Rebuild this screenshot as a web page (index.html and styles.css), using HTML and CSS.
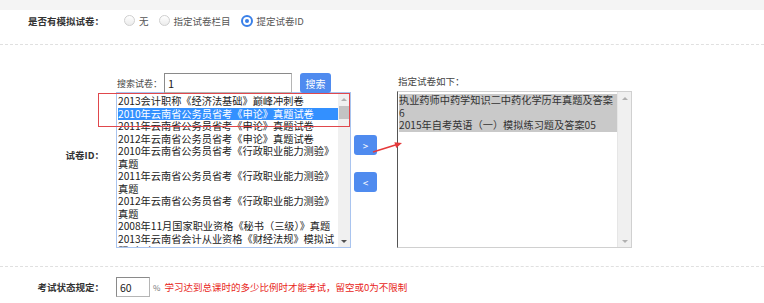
FILE: index.html
```html
<!DOCTYPE html>
<html lang="zh-CN">
<head>
    <meta charset="UTF-8">
    <title>模拟试卷设置</title>
    <link rel="stylesheet" href="styles.css">
</head>
<body>
    <div class="topbar"></div>

    <div class="row row-radio">
        <div class="label">是否有模拟试卷：</div>
        <div class="radios">
            <label class="radio"><span class="dot"></span>无</label>
            <label class="radio"><span class="dot"></span>指定试卷栏目</label>
            <label class="radio on"><span class="dot"></span>提定试卷ID</label>
        </div>
    </div>

    <div class="sep"></div>

    <div class="row row-paper">
        <div class="label">试卷ID：</div>
        <div class="picker">
            <div class="pick-left">
                <div class="search">
                    <span class="search-label">搜索试卷：</span>
                    <span class="input search-input">1</span>
                    <span class="btn btn-search">搜索</span>
                </div>
                <div class="listbox src">
                    <div class="options">
                        <div class="opt">2013会计职称《经济法基础》巅峰冲刺卷</div>
                        <div class="opt sel">2010年云南省公务员省考《申论》真题试卷</div>
                        <div class="opt">2011年云南省公务员省考《申论》真题试卷</div>
                        <div class="opt">2012年云南省公务员省考《申论》真题试卷</div>
                        <div class="opt">2010年云南省公务员省考《行政职业能力测验》真题</div>
                        <div class="opt">2011年云南省公务员省考《行政职业能力测验》真题</div>
                        <div class="opt">2012年云南省公务员省考《行政职业能力测验》真题</div>
                        <div class="opt">2008年11月国家职业资格《秘书（三级）》真题</div>
                        <div class="opt">2013年云南省会计从业资格《财经法规》模拟试题（一）</div>
                    </div>
                    <div class="sbar">
                        <span class="arr up"></span>
                        <span class="thumb"></span>
                        <span class="track"></span>
                        <span class="arr down dark"></span>
                    </div>
                </div>
                <div class="mark"></div>
            </div>

            <div class="moves">
                <span class="btn btn-move">&gt;</span>
                <span class="btn btn-move">&lt;</span>
            </div>

            <div class="pick-right">
                <div class="pick-title">指定试卷如下：</div>
                <div class="listbox dst">
                    <div class="options">
                        <div class="opt chosen">执业药师中药学知识二中药化学历年真题及答案6</div>
                        <div class="opt chosen">2015年自考英语（一）模拟练习题及答案05</div>
                    </div>
                    <div class="sbar light">
                        <span class="arr up"></span>
                        <span class="track"></span>
                        <span class="arr down"></span>
                    </div>
                </div>
            </div>

            <!-- 标注箭头 -->
            <svg class="arrow" width="300" height="100" viewBox="0 0 300 100">
                <line x1="257" y1="79" x2="281" y2="71.5" stroke="#e5393a" stroke-width="1.6"/>
                <polygon points="286,70 280.2,75 278.4,69.2" fill="#e5393a"/>
            </svg>
        </div>
    </div>

    <div class="sep"></div>

    <div class="row row-status">
        <div class="label">考试状态规定：</div>
        <div class="status">
            <span class="input pct-input">60</span>
            <span class="pct">%</span>
            <span class="hint">学习达到总课时的多少比例时才能考试，留空或0为不限制</span>
        </div>
    </div>
</body>
</html>
```

FILE: styles.css
```css
* {
    box-sizing: border-box;
}

body {
    margin: 0;
    font-family: "Noto Sans CJK SC", "Noto Sans", sans-serif;
    color: #333;
    background: #fff;
}

.topbar {
    height: 10px;
    background: #f4f4f4;
}

.row {
    display: grid;
    grid-template-columns: 104px 1fr;
    column-gap: 12px;
}

.label {
    text-align: right;
    font-weight: bold;
    font-size: 9.5px;
    line-height: 12px;
    color: #333;
    white-space: nowrap;
}

.sep {
    border-top: 1px dashed #e0e0e0;
}

/* 单选 */
.row-radio {
    height: 21px;
    align-items: center;
    margin-bottom: 13px;
}

.radios {
    display: flex;
    align-items: center;
    padding-left: 8px;
    font-size: 9.5px;
    color: #555;
}

.radio {
    display: flex;
    align-items: center;
    margin-right: 10px;
}

.dot {
    width: 11px;
    height: 11px;
    border-radius: 50%;
    border: 1px solid #cfcfcf;
    background: linear-gradient(#fff, #ececec);
    margin-right: 4px;
    position: relative;
}

.radio.on .dot {
    width: 12px;
    height: 12px;
    border: 2px solid #3a80e8;
    background: #fff;
}

.radio.on .dot::after {
    content: '';
    position: absolute;
    left: 2px;
    top: 2px;
    width: 4px;
    height: 4px;
    border-radius: 50%;
    background: #3a80e8;
}

/* 试卷选择 */
.row-paper {
    padding-top: 28px;
    margin-bottom: 18px;
}

.row-paper .label {
    padding-top: 76px;
}

.picker {
    display: flex;
    align-items: flex-end;
    position: relative;
}

.pick-left {
    width: 235px;
    position: relative;
}

.search {
    display: flex;
    align-items: center;
    height: 20px;
    margin-bottom: -1px;
}

.search-label {
    flex: 0 0 48px;
    padding-left: 1px;
    font-size: 9px;
    color: #444;
    white-space: nowrap;
}

.input {
    display: flex;
    align-items: center;
    height: 20px;
    border: 1px solid #b5b5b5;
    border-top-color: #8a8a8a;
    border-left-color: #8a8a8a;
    background: #fff;
    font-size: 11px;
    color: #222;
}

.search-input {
    flex: 0 0 128px;
    padding-left: 3px;
}

.btn {
    display: flex;
    align-items: center;
    justify-content: center;
    background: #4f8bef;
    color: #fff;
    border-radius: 3px;
}

.btn-search {
    flex: 0 0 31px;
    height: 20px;
    margin-left: 8px;
    font-size: 10px;
}

.listbox {
    display: flex;
    background: #fff;
}

.listbox.src {
    height: 156px;
    border: 1px solid #a9c4ef;
}

.options {
    flex: 1;
    overflow: hidden;
    padding: 2px 0 0 1px;
    font-size: 10.2px;
    line-height: 12.5px;
    color: #222;
}

.opt.sel {
    background: #3390ff;
    color: #fff;
}

.opt.chosen {
    background: #c9c9c9;
    color: #333;
}

.sbar {
    width: 12px;
    display: flex;
    flex-direction: column;
    background: #f0f0f0;
}

.sbar.light {
    width: 14px;
    border-left: 1px solid #e6e6e6;
}

.arr {
    height: 13px;
    position: relative;
}

.arr::after {
    content: '';
    position: absolute;
    left: 50%;
    top: 50%;
    margin-left: -3px;
    border-left: 3px solid transparent;
    border-right: 3px solid transparent;
}

.arr.up::after {
    margin-top: -2px;
    border-bottom: 3px solid #b0b0b0;
}

.arr.down::after {
    margin-top: -1px;
    border-top: 3px solid #b0b0b0;
}

.arr.down.dark::after {
    border-top-color: #505050;
}

.thumb {
    height: 13px;
    margin: 0 1px;
    background: #c3c3c3;
}

.track {
    flex: 1;
}

.mark {
    position: absolute;
    left: -18px;
    top: 20px;
    width: 252px;
    height: 34px;
    border: 1px solid #e0474c;
}

.moves {
    align-self: flex-start;
    margin: 62px 20px 0 3px;
    display: flex;
    flex-direction: column;
    gap: 17px;
}

.btn-move {
    width: 23px;
    height: 20px;
    font-size: 10px;
}

.pick-right {
    width: 235px;
}

.pick-title {
    font-size: 9.5px;
    color: #444;
    margin-bottom: 3px;
    padding-left: 1px;
}

.listbox.dst {
    height: 157px;
    border: 1px solid #d0d0d0;
    border-left-color: #555;
}

.arrow {
    position: absolute;
    left: 0;
    top: 0;
    pointer-events: none;
}

/* 考试状态 */
.row-status {
    padding-top: 10px;
    align-items: center;
}

.status {
    display: flex;
    align-items: center;
}

.pct-input {
    width: 34px;
    padding-left: 3px;
    font-size: 10.5px;
}

.pct {
    margin: 0 4px 0 3px;
    font-size: 8px;
    color: #777;
}

.hint {
    font-size: 9.5px;
    color: #e8261a;
}
```
